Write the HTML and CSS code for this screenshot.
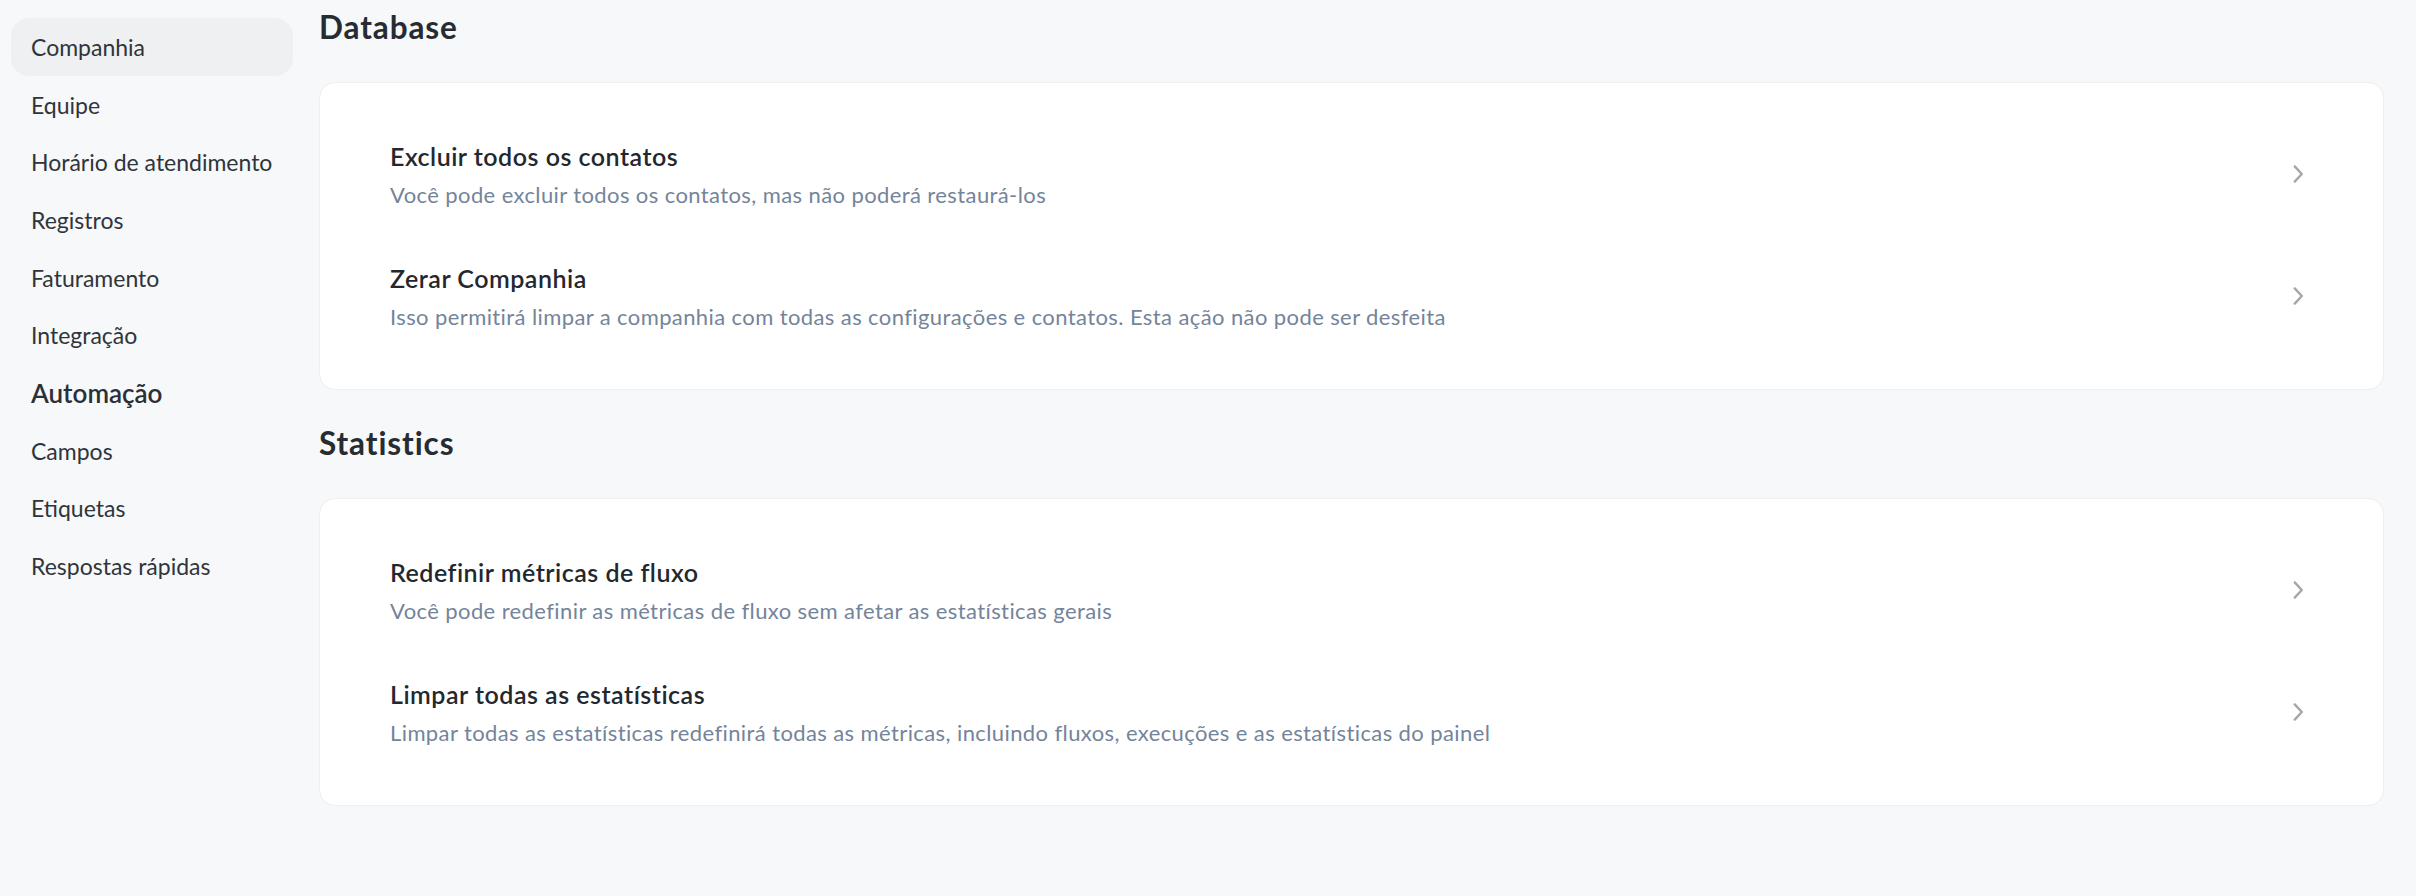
FILE: index.html
```html
<!DOCTYPE html>
<html lang="pt-BR">
<head>
<meta charset="utf-8">
<title>Configurações</title>
<link rel="stylesheet" href="styles.css">
</head>
<body>
<div class="layout">
  <nav class="sidebar">
    <a class="nav-item active">Companhia</a>
    <a class="nav-item">Equipe</a>
    <a class="nav-item">Horário de atendimento</a>
    <a class="nav-item">Registros</a>
    <a class="nav-item">Faturamento</a>
    <a class="nav-item">Integração</a>
    <div class="nav-item nav-heading">Automação</div>
    <a class="nav-item">Campos</a>
    <a class="nav-item">Etiquetas</a>
    <a class="nav-item">Respostas rápidas</a>
  </nav>
  <main class="main">
    <section class="section">
      <h2 class="section-title">Database</h2>
      <div class="card">
        <div class="row">
          <div class="row-text">
            <div class="row-title">Excluir todos os contatos</div>
            <div class="row-desc">Você pode excluir todos os contatos, mas não poderá restaurá-los</div>
          </div>
          <svg class="chevron" viewBox="0 0 24 24"><polyline points="9 5 15.5 12 9 19"/></svg>
        </div>
        <div class="row">
          <div class="row-text">
            <div class="row-title">Zerar Companhia</div>
            <div class="row-desc">Isso permitirá limpar a companhia com todas as configurações e contatos. Esta ação não pode ser desfeita</div>
          </div>
          <svg class="chevron" viewBox="0 0 24 24"><polyline points="9 5 15.5 12 9 19"/></svg>
        </div>
      </div>
    </section>
    <section class="section">
      <h2 class="section-title">Statistics</h2>
      <div class="card">
        <div class="row">
          <div class="row-text">
            <div class="row-title">Redefinir métricas de fluxo</div>
            <div class="row-desc">Você pode redefinir as métricas de fluxo sem afetar as estatísticas gerais</div>
          </div>
          <svg class="chevron" viewBox="0 0 24 24"><polyline points="9 5 15.5 12 9 19"/></svg>
        </div>
        <div class="row">
          <div class="row-text">
            <div class="row-title">Limpar todas as estatísticas</div>
            <div class="row-desc">Limpar todas as estatísticas redefinirá todas as métricas, incluindo fluxos, execuções e as estatísticas do painel</div>
          </div>
          <svg class="chevron" viewBox="0 0 24 24"><polyline points="9 5 15.5 12 9 19"/></svg>
        </div>
      </div>
    </section>
  </main>
</div>
</body>
</html>
```
FILE: styles.css
```css
* { box-sizing: border-box; }
html, body { margin: 0; padding: 0; }
body {
  background: #f7f8fa;
  font-family: "Lato", "Noto Sans", sans-serif;
  color: #2d3339;
  width: 2416px;
  height: 896px;
  overflow: hidden;
}
.layout {
  display: flex;
  gap: 26px;
  padding: 0 32px 0 11px;
}
.sidebar {
  width: 282px;
  flex: none;
  display: flex;
  flex-direction: column;
  padding-top: 18px;
}
.nav-item {
  height: 57.7px;
  display: flex;
  align-items: center;
  padding: 0 20px;
  font-size: 23px;
  color: #2f353b;
  border-radius: 18px;
  text-decoration: none;
  white-space: nowrap;
}
.nav-item.active { background: #eff0f2; }
.nav-heading {
  font-weight: 600;
  font-size: 26px;
  color: #2a3036;
}
.main {
  flex: 1;
  padding-top: 9px;
}
.section { margin-bottom: 35px; }
.section-title {
  margin: 0 0 37px;
  font-size: 31.5px;
  line-height: 36px;
  font-weight: 700;
  letter-spacing: 0.9px;
  color: #272c32;
}
.card {
  background: #fff;
  border: 1px solid #eceef1;
  border-radius: 16px;
  padding: 30px 0 32px;
}
.row {
  display: flex;
  align-items: center;
  justify-content: space-between;
  padding: 25px 72px 25px 70px;
}
.row-title {
  font-size: 25px;
  line-height: 36px;
  font-weight: 600;
  letter-spacing: 0.5px;
  color: #23282e;
}
.row-desc {
  margin-top: 6px;
  font-size: 22px;
  line-height: 30px;
  letter-spacing: 0.4px;
  color: #74849a;
}
.chevron {
  width: 26px;
  height: 26px;
  fill: none;
  stroke: #a6a6a6;
  stroke-width: 2.2;
  stroke-linecap: round;
  stroke-linejoin: round;
  flex: none;
}
```
